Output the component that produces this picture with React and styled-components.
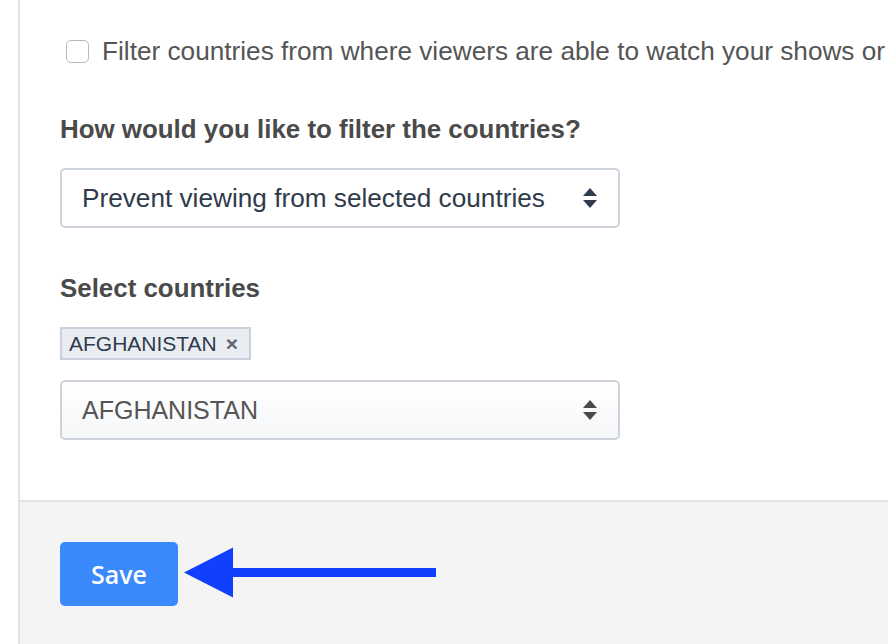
import React from "react";
import styled, { createGlobalStyle } from "styled-components";

const GlobalStyle = createGlobalStyle`
  html, body {
    margin: 0;
    padding: 0;
    background: #ffffff;
  }
  body {
    font-family: "Liberation Sans", Arial, Helvetica, sans-serif;
  }
`;

const Page = styled.div`
  display: flex;
  height: 644px;
  width: 888px;
  overflow: hidden;
`;

const Gutter = styled.div`
  width: 18px;
  flex-shrink: 0;
  background: #ffffff;
`;

const Panel = styled.div`
  flex: 1;
  display: flex;
  flex-direction: column;
  border-left: 2px solid #e2e2e2;
  min-width: 0;
`;

const Body = styled.div`
  display: flex;
  flex-direction: column;
  align-items: flex-start;
  padding: 36px 0 60px 40px;
`;

const CheckRow = styled.label`
  display: flex;
  align-items: center;
  gap: 13px;
  padding-left: 6px;
  height: 30px;
  white-space: nowrap;
  font-size: 26.2px;
  color: #555555;
`;

const CheckBox = styled.span`
  width: 21px;
  height: 21px;
  flex-shrink: 0;
  border: 1.5px solid #b9b9b9;
  border-radius: 5px;
  background: #ffffff;
`;

const Heading = styled.h3`
  margin: ${(p) => p.$top}px 0 0;
  height: 30px;
  line-height: 30px;
  font-size: 25.9px;
  font-weight: 700;
  color: #4a4a4a;
`;

const Select = styled.div`
  box-sizing: border-box;
  margin-top: ${(p) => p.$top}px;
  width: 560px;
  height: 60px;
  display: flex;
  align-items: center;
  justify-content: space-between;
  padding: 0 20px 0 20px;
  border: 2px solid #cdd4dc;
  border-radius: 5px;
  background: ${(p) =>
    p.$muted ? "linear-gradient(#ffffff, #f6f7f9)" : "#ffffff"};
  font-size: ${(p) => (p.$muted ? 25 : 26.2)}px;
  color: ${(p) => (p.$muted ? "#555555" : "#2f3b4b")};
`;

const Tag = styled.span`
  box-sizing: border-box;
  margin-top: 24px;
  height: 33px;
  display: inline-flex;
  align-items: center;
  gap: 9px;
  padding: 0 11px 0 7px;
  background: #e9edf2;
  border: 2px solid #c9d2dc;
  font-size: 21px;
  color: #2f3b4b;
`;

const TagClose = styled.span`
  font-size: 21px;
  font-weight: 700;
  color: #5b6675;
`;

const Footer = styled.div`
  flex: 1;
  display: flex;
  align-items: flex-start;
  gap: 6px;
  padding: 40px 0 0 40px;
  background: #f4f4f4;
  border-top: 2px solid #e2e2e2;
`;

const SaveButton = styled.button`
  width: 118px;
  height: 64px;
  border: none;
  border-radius: 5px;
  background: #3a89fd;
  color: #ffffff;
  font-family: "Open Sans", sans-serif;
  font-size: 25px;
  font-weight: 600;
  cursor: pointer;
`;

const Arrow = styled.svg`
  margin-top: 5px;
  flex-shrink: 0;
`;

const Caret = ({ color }) => (
  <svg width="16" height="22" viewBox="0 0 16 22">
    <path d="M8 1 L15 9 L1 9 Z" fill={color} />
    <path d="M1 13 L15 13 L8 21 Z" fill={color} />
  </svg>
);

export default function App() {
  return (
    <>
      <GlobalStyle />
      <Page>
        <Gutter />
        <Panel>
          <Body>
            <CheckRow>
              <CheckBox />
              Filter countries from where viewers are able to watch your shows or
            </CheckRow>
            <Heading $top={48}>How would you like to filter the countries?</Heading>
            <Select $top={24}>
              Prevent viewing from selected countries
              <Caret color="#2f3b4b" />
            </Select>
            <Heading $top={45}>Select countries</Heading>
            <Tag>
              AFGHANISTAN
              <TagClose>×</TagClose>
            </Tag>
            <Select $top={20} $muted>
              AFGHANISTAN
              <Caret color="#4a4a4a" />
            </Select>
          </Body>
          <Footer>
            <SaveButton>Save</SaveButton>
            <Arrow width="254" height="51" viewBox="0 0 254 51">
              <polygon points="0,25.5 49,0.5 49,50.5" fill="#1040fc" />
              <rect x="48" y="21" width="204" height="9" fill="#1040fc" />
            </Arrow>
          </Footer>
        </Panel>
      </Page>
    </>
  );
}
